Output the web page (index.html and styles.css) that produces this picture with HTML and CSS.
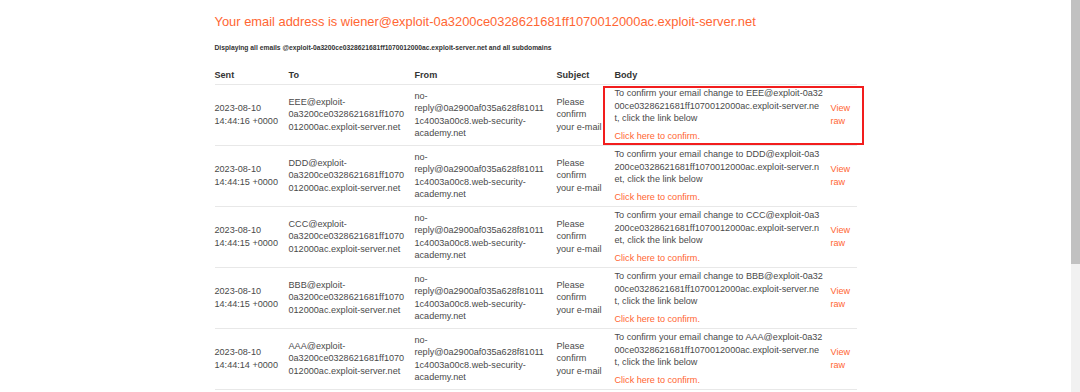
FILE: index.html
```html
<!DOCTYPE html>
<html>
<head>
<meta charset="utf-8">
<link rel="stylesheet" href="styles.css">
</head>
<body>
<div class="page">
  <div class="container">
    <h1 class="title">Your email address is wiener@exploit-0a3200ce0328621681ff1070012000ac.exploit-server.net</h1>
    <h6 class="subtitle">Displaying all emails @exploit-0a3200ce0328621681ff1070012000ac.exploit-server.net and all subdomains</h6>
    <table class="emails">
      <colgroup>
        <col class="c-sent"><col class="c-to"><col class="c-from"><col class="c-subj"><col class="c-body"><col class="c-raw">
      </colgroup>
      <thead>
        <tr><th>Sent</th><th>To</th><th>From</th><th>Subject</th><th>Body</th><th></th></tr>
      </thead>
      <tbody>
        <tr>
          <td>2023-08-10 14:44:16 +0000</td>
          <td>EEE@exploit-0a3200ce0328621681ff1070012000ac.exploit-server.net</td>
          <td>no-reply@0a2900af035a628f810111c4003a00c8.web-security-academy.net</td>
          <td>Please confirm your e-mail</td>
          <td class="body-cell"><div class="highlight"></div><div class="msg">To confirm your email change to EEE@exploit-0a3200ce0328621681ff1070012000ac.exploit-server.net, click the link below</div><a class="confirm">Click here to confirm.</a></td>
          <td><a class="raw">View raw</a></td>
        </tr>
        <tr>
          <td>2023-08-10 14:44:15 +0000</td>
          <td>DDD@exploit-0a3200ce0328621681ff1070012000ac.exploit-server.net</td>
          <td>no-reply@0a2900af035a628f810111c4003a00c8.web-security-academy.net</td>
          <td>Please confirm your e-mail</td>
          <td class="body-cell"><div class="msg">To confirm your email change to DDD@exploit-0a3200ce0328621681ff1070012000ac.exploit-server.net, click the link below</div><a class="confirm">Click here to confirm.</a></td>
          <td><a class="raw">View raw</a></td>
        </tr>
        <tr>
          <td>2023-08-10 14:44:15 +0000</td>
          <td>CCC@exploit-0a3200ce0328621681ff1070012000ac.exploit-server.net</td>
          <td>no-reply@0a2900af035a628f810111c4003a00c8.web-security-academy.net</td>
          <td>Please confirm your e-mail</td>
          <td class="body-cell"><div class="msg">To confirm your email change to CCC@exploit-0a3200ce0328621681ff1070012000ac.exploit-server.net, click the link below</div><a class="confirm">Click here to confirm.</a></td>
          <td><a class="raw">View raw</a></td>
        </tr>
        <tr>
          <td>2023-08-10 14:44:15 +0000</td>
          <td>BBB@exploit-0a3200ce0328621681ff1070012000ac.exploit-server.net</td>
          <td>no-reply@0a2900af035a628f810111c4003a00c8.web-security-academy.net</td>
          <td>Please confirm your e-mail</td>
          <td class="body-cell"><div class="msg">To confirm your email change to BBB@exploit-0a3200ce0328621681ff1070012000ac.exploit-server.net, click the link below</div><a class="confirm">Click here to confirm.</a></td>
          <td><a class="raw">View raw</a></td>
        </tr>
        <tr>
          <td>2023-08-10 14:44:14 +0000</td>
          <td>AAA@exploit-0a3200ce0328621681ff1070012000ac.exploit-server.net</td>
          <td>no-reply@0a2900af035a628f810111c4003a00c8.web-security-academy.net</td>
          <td>Please confirm your e-mail</td>
          <td class="body-cell"><div class="msg">To confirm your email change to AAA@exploit-0a3200ce0328621681ff1070012000ac.exploit-server.net, click the link below</div><a class="confirm">Click here to confirm.</a></td>
          <td><a class="raw">View raw</a></td>
        </tr>
      </tbody>
    </table>
  </div>
</div>
<div class="scrollbar"><div class="thumb"></div></div>
</body>
</html>
```

FILE: styles.css
```css
html, body {
  margin: 0;
  padding: 0;
  height: 392px;
  overflow: hidden;
  background: #fff;
}

body {
  display: flex;
  font-family: "Liberation Sans", Arial, sans-serif;
  color: #4a4a4a;
}

.page {
  flex: 1;
  min-width: 0;
}

.container {
  width: 642px;
  margin: 0 auto;
}

.title {
  margin: 14px 0 0;
  font-size: 12.9px;
  line-height: 15px;
  font-weight: normal;
  color: #ff6633;
  white-space: nowrap;
}

.subtitle {
  margin: 13.5px 0 0;
  font-size: 6.73px;
  line-height: 9px;
  font-weight: bold;
  color: #333;
  white-space: nowrap;
}

.emails {
  margin-top: 14px;
  width: 642px;
  table-layout: fixed;
  border-collapse: collapse;
  font-size: 9.1px;
  line-height: 12.5px;
}

.c-sent { width: 74px; }
.c-to { width: 126px; }
.c-from { width: 142px; }
.c-subj { width: 58px; }
.c-body { width: 216px; }
.c-raw { width: 26px; }

.emails th {
  text-align: left;
  font-weight: bold;
  color: #333;
  padding: 3px 0 2.5px;
}

.emails td {
  vertical-align: middle;
  padding: 2.5px 0;
  border-top: 1px solid #e8e8e8;
  overflow-wrap: anywhere;
}

.emails td:nth-child(1) { padding-right: 8px; }
.emails td:nth-child(2) { padding-right: 7px; }
.emails td:nth-child(3) { padding-right: 12px; }
.emails td:nth-child(4) { padding-right: 10px; }
.emails td:nth-child(5) { padding-right: 7px; }

.emails tbody tr:last-child td {
  border-bottom: 1px solid #e8e8e8;
}

.body-cell {
  position: relative;
}

.msg {
  word-break: break-all;
}

.confirm {
  display: block;
  margin-top: 5px;
  color: #ff6633;
}

.raw {
  color: #ff6633;
}

.highlight {
  position: absolute;
  left: -12px;
  top: 1px;
  width: 261px;
  height: 59px;
  border: 2px solid #f21d1d;
  box-sizing: border-box;
}

.scrollbar {
  width: 9px;
  flex: none;
  background: #f1f1f1;
}

.thumb {
  height: 264px;
  background: #c1c1c1;
}
```
